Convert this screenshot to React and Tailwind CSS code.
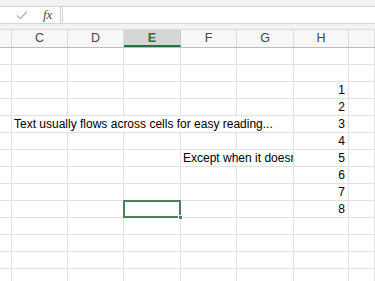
import React from 'react';

const cols = ['', 'C', 'D', 'E', 'F', 'G', 'H', ''];
const grid = 'grid grid-cols-[12px_56px_56px_57px_56px_57px_55px_1fr]';
const cell = 'h-[17px] border-r border-b border-[#e1e1e1]';

const Row = ({ children }) => <div className={grid}>{children}</div>;

const Num = ({ n }) => (
  <div className={`${cell} text-right pr-[3px] leading-[17px]`}>{n}</div>
);

const Blank = ({ className = '' }) => <div className={`${cell} ${className}`} />;

const App = () => {
  const rows = [];
  for (let r = 0; r < 14; r++) {
    const n = r >= 2 && r <= 9 ? r - 1 : null;
    if (n === 3) {
      rows.push(
        <Row key={r}>
          <Blank />
          <div className={`${cell} col-span-5 pl-[2px] leading-[17px] whitespace-nowrap`}>
            Text usually flows across cells for easy reading...
          </div>
          <Num n={n} />
          <Blank />
        </Row>
      );
    } else if (n === 5) {
      rows.push(
        <Row key={r}>
          <Blank />
          <Blank />
          <Blank />
          <Blank />
          <div className={`${cell} col-span-2 pl-[2px] leading-[17px] whitespace-nowrap overflow-hidden`}>
            Except when it doesn't
          </div>
          <Num n={n} />
          <Blank />
        </Row>
      );
    } else {
      rows.push(
        <Row key={r}>
          <Blank />
          <Blank />
          <Blank />
          {n === 8 ? (
            <div className={`${cell} relative`}>
              <div className="absolute -left-px -top-px right-[-1px] bottom-[-1px] border-2 border-[#4c7f5c]" />
              <div className="absolute right-[-3px] bottom-[-3px] w-[5px] h-[5px] bg-[#4c7f5c] border border-white" />
            </div>
          ) : (
            <Blank />
          )}
          <Blank />
          <Blank />
          {n ? <Num n={n} /> : <Blank />}
          <Blank />
        </Row>
      );
    }
  }

  return (
    <div className="w-[375px] h-[281px] overflow-hidden bg-white text-[12px] text-black font-['Liberation_Sans',sans-serif]">
      {/* Formula bar */}
      <div className="bg-[#f3f3f3] pt-[6px] pb-[5px] border-b border-[#dadada]">
        <div className="flex h-[18px] bg-white border-y border-[#d4d4d4]">
          <div className="w-[61px] flex items-center border-r border-[#d4d4d4]">
            <svg width="12" height="10" viewBox="0 0 12 10" className="ml-[16px]">
              <path d="M1 5.5 L4.5 8.5 L11 1.5" fill="none" stroke="#b3b3b3" strokeWidth="1.3" />
            </svg>
            <span className="ml-[15px] text-[13px] italic text-[#444] font-['Liberation_Serif',serif]">fx</span>
          </div>
          <div className="flex-1 ml-[1px] border-l border-[#d4d4d4]" />
        </div>
      </div>

      {/* Column headers */}
      <div className={`${grid} bg-[#f7f7f7] border-b border-[#bdbdbd]`}>
        {cols.map((c, i) =>
          c === 'E' ? (
            <div key={i} className="h-[17px] bg-[#d6d6d6] border-r border-[#c8c8c8] border-b-2 border-b-[#217346] text-center leading-[16px] font-bold text-[#217346] text-[12.5px]">
              {c}
            </div>
          ) : (
            <div key={i} className="h-[17px] border-r border-[#dcdcdc] text-center leading-[17px] text-[12.5px] text-[#444]">
              {c}
            </div>
          )
        )}
      </div>

      {rows}
    </div>
  );
};

export default App;
